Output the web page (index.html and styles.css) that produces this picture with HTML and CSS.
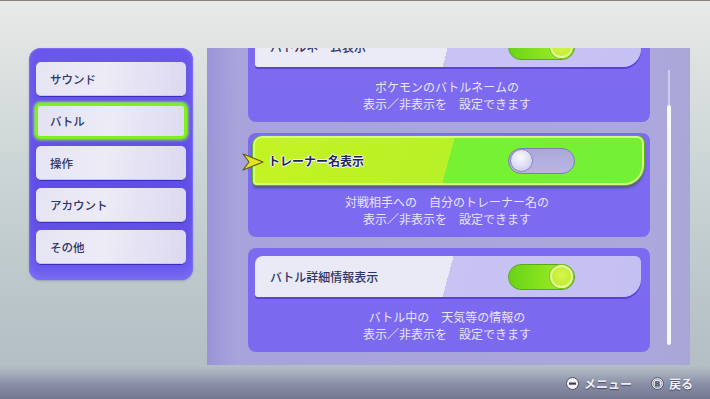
FILE: index.html
```html
<!DOCTYPE html>
<html lang="ja">
<head>
<meta charset="utf-8">
<link rel="stylesheet" href="styles.css">
</head>
<body>
<div class="screen">
  <div class="topline"></div>
  <div class="main">
    <nav class="side">
      <div class="tab">サウンド</div>
      <div class="tab tab-on">バトル</div>
      <div class="tab">操作</div>
      <div class="tab">アカウント</div>
      <div class="tab">その他</div>
    </nav>
    <section class="pane">
      <div class="list">
        <div class="card">
          <div class="head">
            <span class="label">バトルネーム表示</span>
            <span class="toggle on"><span class="knob"></span></span>
          </div>
          <p class="desc">ポケモンのバトルネームの<br>表示／非表示を　設定できます</p>
        </div>
        <div class="card">
          <div class="head head-sel">
            <svg class="pointer" width="22" height="18" viewBox="0 0 22 18"><path d="M1 1 L21 9 L1 17 L7 9 Z" fill="#e4e41c" stroke="#5a5a10" stroke-width="1.2" stroke-linejoin="round"/></svg>
            <span class="label label-sel">トレーナー名表示</span>
            <span class="toggle off"><span class="knob"></span></span>
          </div>
          <p class="desc">対戦相手への　自分のトレーナー名の<br>表示／非表示を　設定できます</p>
        </div>
        <div class="card">
          <div class="head">
            <span class="label">バトル詳細情報表示</span>
            <span class="toggle on"><span class="knob"></span></span>
          </div>
          <p class="desc">バトル中の　天気等の情報の<br>表示／非表示を　設定できます</p>
        </div>
      </div>
      <div class="scroll"><div class="track"></div><div class="thumb"></div></div>
    </section>
  </div>
  <footer class="hints">
    <span class="hint">
      <svg width="13" height="13" viewBox="0 0 13 13"><circle cx="6.5" cy="6.5" r="6" fill="#f2f2f8" stroke="#50526a" stroke-width="1"/><rect x="3" y="5.5" width="7" height="2.2" fill="#3c3e56"/></svg>
      <span>メニュー</span>
    </span>
    <span class="hint">
      <svg width="13" height="13" viewBox="0 0 13 13"><circle cx="6.5" cy="6.5" r="6" fill="#eeeef6" stroke="#50526a" stroke-width="1"/><circle cx="6.5" cy="6.5" r="4.3" fill="none" stroke="#8a8ca4" stroke-width="0.8"/><text x="6.5" y="9.3" text-anchor="middle" font-family="Liberation Sans, sans-serif" font-weight="bold" font-size="7.5" fill="#50526a">B</text></svg>
      <span>戻る</span>
    </span>
  </footer>
</div>
</body>
</html>
```

FILE: styles.css
```css
* { box-sizing: border-box; }
html, body { margin: 0; padding: 0; }
body {
  width: 710px;
  height: 399px;
  overflow: hidden;
  font-family: "Noto Sans CJK JP", "Noto Sans", sans-serif;
}
.screen {
  width: 710px;
  height: 399px;
  display: flex;
  flex-direction: column;
  overflow: hidden;
  background: linear-gradient(to bottom, #e9ebea 0px, #dfe3e2 50px, #cdd6d6 160px, #bcc8cb 280px, #b3bec5 366px, #a4acba 374px, #8a8ea6 384px, #74778f 399px);
}
.topline {
  height: 1px;
  background: #8e8070;
  flex: 0 0 1px;
}
.main {
  display: flex;
  align-items: flex-start;
  padding: 47px 0 0 29px;
  height: 365px;
  flex: 0 0 auto;
}
.side {
  width: 164px;
  height: 232px;
  padding: 14px 7px;
  display: flex;
  flex-direction: column;
  gap: 8px;
  border-radius: 12px;
  background: linear-gradient(to bottom, #6a58ec, #5f4ce6 70%, #6d5cee);
  box-shadow: inset 0 0 0 1px #7c6cf4, inset 0 -6px 8px rgba(140,125,250,.5), 0 1px 2px rgba(60,50,140,.3);
}
.tab {
  height: 34px;
  flex: 0 0 34px;
  border-radius: 5px;
  padding-left: 14px;
  display: flex;
  align-items: center;
  font-size: 11.5px;
  font-weight: 500;
  color: #2c3668;
  background: linear-gradient(100deg, #e6e4f3 0%, #ecebf6 45%, #dcd9f0 100%);
  box-shadow: 0 1px 0 #3a2ebc, inset 0 -1px 0 #c8c4e6;
}
.tab-on {
  height: 36px;
  flex-basis: 36px;
  margin: -1px -1px;
  padding-left: 12px;
  border: 3px solid #7df01e;
  box-shadow: 0 0 3px 1px #9cff40, 0 1px 0 #3a2ebc;
  background: linear-gradient(100deg, #e4e2f2 0%, #ecebf6 50%, #dedbf1 100%);
}
.pane {
  margin-left: 14px;
  width: 483px;
  height: 317px;
  display: flex;
  overflow: hidden;
  background: linear-gradient(to right, #9a93d8 0px, #a7a3dc 30px, #aba7dd 440px, #a9a6d8 483px);
  opacity: 0.97;
}
.list {
  margin-top: -30px;
  padding-left: 41px;
  width: 443px;
  display: flex;
  flex-direction: column;
  gap: 11px;
}
.card {
  width: 402px;
  height: 104px;
  flex: 0 0 104px;
  border-radius: 8px;
  padding: 8px 9px 0 7px;
  background: #7a67f2;
  position: relative;
}
.head {
  height: 41px;
  display: flex;
  align-items: center;
  padding-left: 15px;
  border-radius: 8px 6px 18px 3px;
  background: linear-gradient(105deg, #ecebf8 0, #ecebf8 50%, #c9c3f5 50%, #c6c0f4 100%);
  box-shadow: 0 2px 0 #5140cf;
  position: relative;
}
.head-sel {
  height: 49px;
  margin: -5px -3px -3px -2px;
  padding-left: 13px;
  border: 2px solid #d6ff7c;
  border-radius: 9px 7px 20px 4px;
  background: linear-gradient(105deg, #c4f41e 0, #b8f222 50%, #76f22e 50%, #70f230 100%);
  box-shadow: 0 0 0 1px #58b414, 0 3px 3px rgba(40,60,20,.55);
}
.pointer {
  position: absolute;
  left: -13px;
  top: 15px;
}
.label {
  flex: 0 0 238px;
  font-size: 12px;
  font-weight: 500;
  color: #283262;
}
.label-sel {
  flex-basis: 240px;
  font-weight: 700;
  color: #1c1f52;
  text-shadow: 1px 0 0 #fff, -1px 0 0 #fff, 0 1px 0 #fff, 0 -1px 0 #fff;
}
.toggle {
  width: 67px;
  height: 26px;
  border-radius: 13px;
  display: flex;
  align-items: center;
  padding: 0 1px;
}
.toggle.off {
  background: linear-gradient(to bottom, #a9a7da, #b8b6e4);
  border: 1px solid #7d7bb8;
  justify-content: flex-start;
}
.toggle.on {
  background: linear-gradient(to right, #66d412, #8ee61c 60%, #a6ea2a);
  border: 1px solid #56a816;
  justify-content: flex-end;
}
.knob {
  width: 23px;
  height: 23px;
  border-radius: 50%;
}
.off .knob {
  background: radial-gradient(circle at 45% 35%, #fafaff 0, #e4e2f6 45%, #c2bfe8 100%);
  border: 1px solid #8684bc;
}
.on .knob {
  background: radial-gradient(circle at 50% 45%, #d8f84a 0, #c6f034 60%, #b4e628 100%);
  border: 2px solid #eaff98;
  box-shadow: 0 0 0 1px #78c41a;
}
.desc {
  margin: 11px 0 0;
  font-size: 12px;
  line-height: 17px;
  text-align: center;
  color: #e9e6ff;
  padding-right: 2px;
}
.scroll {
  margin-left: 17px;
  width: 4px;
  padding: 22px 0 20px;
  display: flex;
  flex-direction: column;
  align-items: center;
}
.track {
  width: 2px;
  height: 35px;
  background: #cfcdec;
}
.thumb {
  width: 4px;
  flex: 1;
  border-radius: 2px;
  background: #fbfbff;
}
.hints {
  flex: 1;
  display: flex;
  justify-content: flex-end;
  align-items: center;
  gap: 19px;
  padding: 2px 17px 0 0;
}
.hint {
  display: flex;
  align-items: center;
  gap: 5px;
  font-size: 12px;
  font-weight: 700;
  color: #f0f0f8;
  text-shadow: 0 1px 1px rgba(30,30,60,.6);
}
.hint svg { display: block; }
```
